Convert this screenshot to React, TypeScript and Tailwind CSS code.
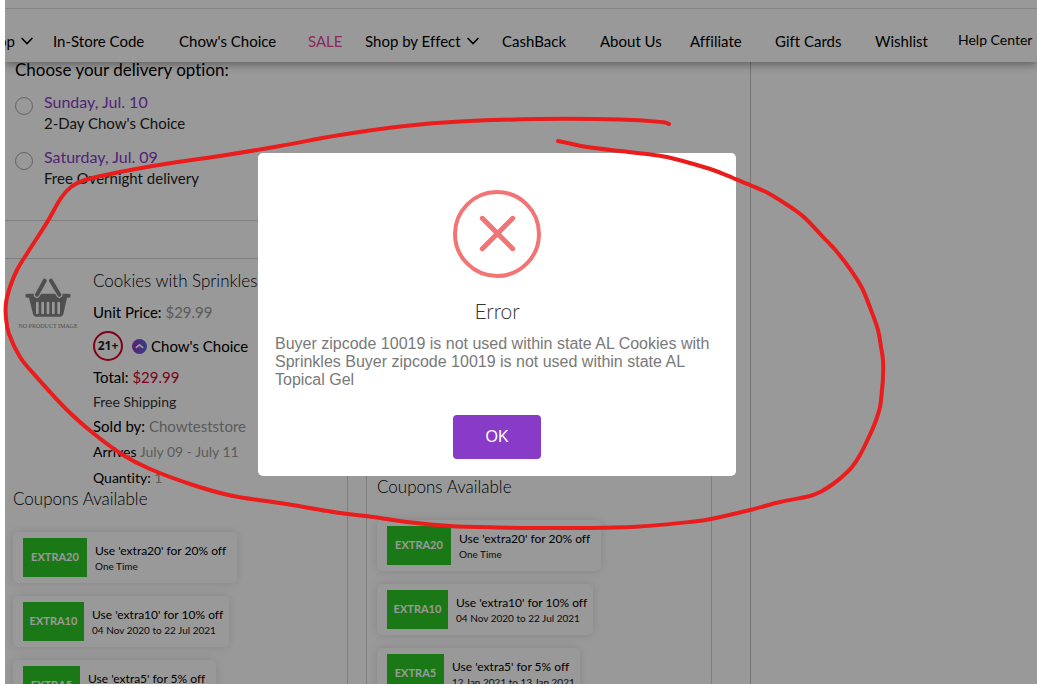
import React from "react";

type Point = [number, number];

const outerStroke: Point[] = [
  [669, 124], [661, 122], [620, 119.5], [540, 119], [460, 121.5], [405, 126], [340, 135],
  [280, 146], [220, 156], [165, 164], [120, 172], [85, 180], [71, 187], [61, 198], [46, 224],
  [28, 252], [17, 270], [10, 287], [6, 303], [6, 318], [9, 334], [20, 357], [33, 373],
  [65, 408], [93, 433], [123, 455], [150, 469], [193, 485], [233, 496], [280, 503],
  [340, 513], [373, 517], [407, 522], [450, 526], [497, 527.5], [540, 528], [587, 528],
  [640, 526.5], [690, 522], [711, 519], [750, 510], [780, 502], [810, 496], [822, 491],
  [833, 484], [843, 476], [852, 467], [860, 455], [868, 439], [875, 423], [880, 407],
  [882, 390], [883, 377], [883, 360], [881, 347], [878, 330], [871, 310], [862, 288],
  [850, 269], [837, 252], [823, 237], [805, 218], [792, 208], [781, 201], [768, 193],
  [750, 185], [733, 178], [713, 170], [690, 163], [667, 157], [647, 154], [620, 151],
  [587, 147], [570, 143.5], [558, 141],
];

// Catmull-Rom spline through the points, written as cubic Béziers.
function smooth(points: Point[]): string {
  let d = `M${points[0][0]} ${points[0][1]}`;
  for (let i = 0; i < points.length - 1; i++) {
    const a = points[Math.max(i - 1, 0)];
    const b = points[i];
    const c = points[i + 1];
    const e = points[Math.min(i + 2, points.length - 1)];
    d += `C${b[0] + (c[0] - a[0]) / 6} ${b[1] + (c[1] - a[1]) / 6} ${c[0] - (e[0] - b[0]) / 6} ${c[1] - (e[1] - b[1]) / 6} ${c[0]} ${c[1]}`;
  }
  return d;
}

function Chevron() {
  return (
    <svg width="12" height="8" viewBox="0 0 12 8" fill="none" stroke="currentColor" strokeWidth="1.5" className="shrink-0" aria-hidden="true">
      <path d="M.6 1 6 6.600 11.400 1" />
    </svg>
  );
}

function Nav() {
  const link = "whitespace-nowrap";
  return (
    <header className="relative z-10 bg-white shadow-[0_3px_8px_rgba(0,0,0,0.35)]">
      <div className="h-[9px] border-b border-[#dedede]" />
      <nav className="grid h-[53px] grid-cols-[48fr_126fr_129fr_57fr_137fr_98fr_90fr_85fr_100fr_83fr_79fr] items-start pt-[21px] text-[15px] leading-[22px] text-black">
        <a href="#shop" className="flex items-center justify-end gap-[6px] overflow-hidden pr-5 whitespace-nowrap">Shop <Chevron /></a>
        <a href="#codes" className={link}>In-Store Code</a>
        <a href="#choice" className={link}>Chow's Choice</a>
        <a href="#sale" className="whitespace-nowrap text-[#e8439f]">SALE</a>
        <a href="#effect" className="flex items-center gap-[6px] whitespace-nowrap">Shop by Effect <Chevron /></a>
        <a href="#cashback" className={link}>CashBack</a>
        <a href="#about" className={link}>About Us</a>
        <a href="#affiliate" className={link}>Affiliate</a>
        <a href="#gift" className={link}>Gift Cards</a>
        <a href="#wishlist" className={link}>Wishlist</a>
        <a href="#help" className="text-[14px] leading-[20px] whitespace-nowrap">Help Center</a>
      </nav>
    </header>
  );
}

function DeliveryOption({ id, day, note }: { id: string; day: string; note: string }) {
  return (
    <label htmlFor={id} className="flex h-[55px] gap-[11px]">
      <input id={id} type="radio" name="delivery" className="mt-[6px] size-[18px] shrink-0 appearance-none rounded-full border border-[#a5a5b0] bg-transparent" />
      <span>
        <span className="block text-[16px] leading-[22px] text-[#883bc7]">{day}</span>
        <span className="block text-[15px] leading-[21px] text-[#222]">{note}</span>
      </span>
    </label>
  );
}

function Basket() {
  return (
    <figure className="w-[60px] shrink-0 pt-[9px] text-[#848484]">
      <svg width="46" height="40" viewBox="0 0 138 120" className="mx-auto" aria-hidden="true">
        <path d="M6 47h126q5 0 5 6t-5 6h-6l-11 50q-2 7-9 7H33q-7 0-9-7L12 59H6q-5 0-5-6t5-6z" fill="currentColor" />
        <g stroke="#fff" strokeWidth="8" strokeLinecap="round">
          <path d="M37 75v30M53 75v30M69 75v30M85 75v30M101 75v30" />
        </g>
        <g strokeLinecap="round" fill="none">
          <path d="M59 8 36 50M78 8l25 42" stroke="#fff" strokeWidth="19" />
          <path d="M59 8 36 50M78 8l25 42" stroke="currentColor" strokeWidth="12" />
        </g>
      </svg>
      <figcaption className="mt-[4px] text-center font-['Liberation_Serif',serif] text-[6px] leading-[8px] whitespace-nowrap">NO PRODUCT IMAGE</figcaption>
    </figure>
  );
}

const coupons = [
  { code: "EXTRA20", text: "Use 'extra20' for 20% off", when: "One Time", card: "w-[224px]", tag: "w-[64px]" },
  { code: "EXTRA10", text: "Use 'extra10' for 10% off", when: "04 Nov 2020 to 22 Jul 2021", card: "w-[216px]", tag: "w-[61px]" },
  { code: "EXTRA5", text: "Use 'extra5' for 5% off", when: "12 Jan 2021 to 13 Jan 2021", card: "w-[203px]", tag: "w-[57px]" },
];

function Coupons() {
  return (
    <section>
      <h3 className="text-[17px] leading-[22px] font-light text-black">Coupons Available</h3>
      <ul className="mt-[22px] flex flex-col gap-[13px]">
        {coupons.map((c) => (
          <li key={c.code} className={`flex h-[51px] items-center gap-2 rounded-[5px] pl-[10px] shadow-[0_0_10px_rgba(0,0,0,0.12)] ${c.card}`}>
            <span className={`flex h-[39px] shrink-0 items-center justify-center bg-[#2ec826] text-[11px] font-bold text-white ${c.tag}`}>{c.code}</span>
            <span className="whitespace-nowrap">
              <span className="block text-[12px] leading-[17px] text-black">{c.text}</span>
              <span className="block text-[10px] leading-[14px] text-[#111]">{c.when}</span>
            </span>
          </li>
        ))}
      </ul>
    </section>
  );
}

function Product() {
  return (
    <article className="flex gap-[15px] pl-[13px] pt-[10px] text-[15px] whitespace-nowrap text-black">
      <Basket />
      <div>
        <h2 className="text-[17px] leading-[24px] font-light">Cookies with Sprinkles</h2>
        <p className="leading-[38px]">Unit Price: <span className="text-[#999]">$29.99</span></p>
        <div className="flex h-[30px] items-center">
          <span className="flex size-[30px] items-center justify-center rounded-full border-2 border-[#d5002b] font-['Open_Sans',sans-serif] text-[12px] font-bold text-[#222]">21+</span>
          <svg width="15" height="15" viewBox="0 0 15 15" className="ml-[9px]" aria-hidden="true">
            <defs>
              <linearGradient id="badge" x1="0" x2="1">
                <stop offset="0" stopColor="#9b30c8" />
                <stop offset="1" stopColor="#5a68dd" />
              </linearGradient>
            </defs>
            <circle cx="7.500" cy="7.500" r="7.500" fill="url(#badge)" />
            <path d="m3.800 8.900 3.700-3 3.700 3" fill="none" stroke="#fff" strokeWidth="1.800" />
          </svg>
          <span className="ml-1">Chow's Choice</span>
        </div>
        <p className="mt-[3px] leading-[26px]">Total: <span className="text-[#d5002b]">$29.99</span></p>
        <p className="text-[14px] leading-[24px] text-[#333]">Free Shipping</p>
        <p className="leading-[24px]">Sold by: <span className="text-[#999]">Chowteststore</span></p>
        <p className="text-[14px] leading-[28px]">Arrives <span className="text-[#999]">July 09 - July 11</span></p>
        <p className="text-[14px] leading-[23px]">Quantity: <span className="text-[#999]">1</span></p>
      </div>
    </article>
  );
}

function ErrorDialog() {
  return (
    <div role="alertdialog" aria-labelledby="dialog-title" aria-describedby="dialog-text" className="absolute top-[153px] left-[258px] flex w-[478px] flex-col items-center rounded-[5px] bg-white px-[17px] pt-[37px] pb-[17px]">
      <svg width="88" height="88" viewBox="0 0 88 88" fill="none" stroke="#f27474" aria-hidden="true">
        <circle cx="44" cy="44" r="42" strokeWidth="4" />
        <path d="m29.300 28.300 30.400 30.400M59.700 28.300 29.300 58.700" strokeWidth="5" strokeLinecap="round" />
      </svg>
      <h1 id="dialog-title" className="mt-[19px] text-[21px] leading-[28px] font-light text-[#333]">Error</h1>
      <p id="dialog-text" className="mt-[10px] w-full font-['Liberation_Sans',Arial,sans-serif] text-[16px] leading-[18px] text-[#797979]">
        Buyer zipcode 10019 is not used within state AL Cookies with Sprinkles Buyer zipcode 10019 is not used within state AL Topical Gel
      </p>
      <button type="button" className="mt-[26px] h-[44px] w-[88px] rounded-[4px] bg-[#883bc7] font-['Liberation_Sans',Arial,sans-serif] text-[16px] text-white">OK</button>
    </div>
  );
}

export default function App() {
  return (
    <div className="relative h-screen overflow-hidden bg-white pl-[5px] font-[Lato,sans-serif] [font-variant-ligatures:none]">
      <div className="relative h-full overflow-hidden">
        <Nav />
        <main className="h-full w-[746px] border-r border-[#c4c4c4]">
          <section className="h-[159px] w-[343px] border-b border-[#d4d4d4] pl-[10px]">
            <h2 className="h-[29px] text-[17px] leading-[16px] whitespace-nowrap text-black">Choose your delivery option:</h2>
            <DeliveryOption id="two-day" day="Sunday, Jul. 10" note="2-Day Chow's Choice" />
            <DeliveryOption id="overnight" day="Saturday, Jul. 09" note="Free Overnight delivery" />
          </section>
          <div className="mt-[37px] flex h-[500px] gap-[18px]">
            <div className="w-[343px] border-t border-r border-[#d4d4d4]">
              <Product />
              <div className="-mt-px pl-2"><Coupons /></div>
            </div>
            <div className="flex w-[346px] flex-col border border-[#d4d4d4] pt-[217px] pl-[10px]">
              <Coupons />
            </div>
          </div>
        </main>
        <div className="absolute inset-0 z-20 bg-black/40" />
      </div>
      <div className="absolute inset-0 z-30">
        <ErrorDialog />
        <svg width="1037" height="684" viewBox="0 0 1037 684" className="pointer-events-none absolute top-0 left-0" aria-hidden="true">
          <path d={smooth(outerStroke)} fill="none" stroke="#ea1c1c" strokeWidth="4" strokeLinecap="round" strokeLinejoin="round" />
        </svg>
      </div>
    </div>
  );
}
